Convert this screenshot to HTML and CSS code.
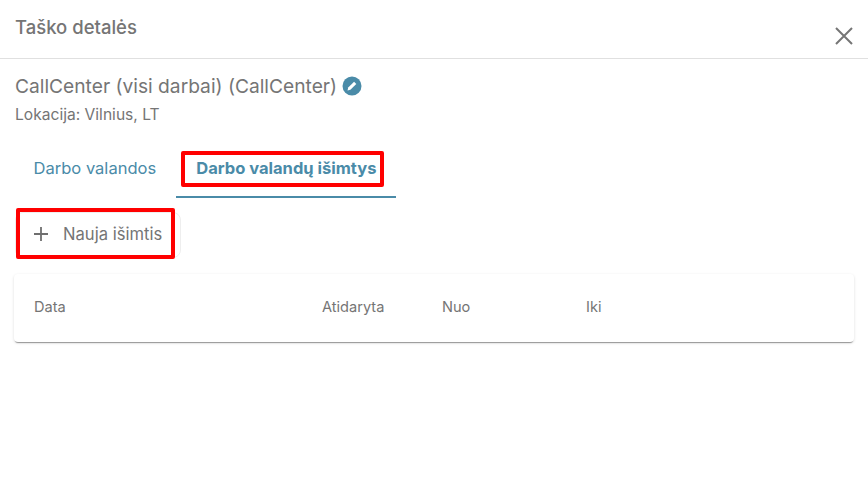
FILE: index.html
```html
<!DOCTYPE html>
<html lang="lt">
<head>
    <meta charset="UTF-8">
    <meta name="viewport" content="width=device-width, initial-scale=1.0">
    <title>Taško detalės</title>
    <link rel="stylesheet" href="styles.css">
</head>
<body>
    <div class="dialog">
        <header class="dialog-header">
            <h2>Taško detalės</h2>
            <button class="close-btn" aria-label="Uždaryti">
                <svg width="18" height="18" viewBox="0 0 18 18"><path d="M1 1 17 17M17 1 1 17" stroke="#757575" stroke-width="2" fill="none"/></svg>
            </button>
        </header>

        <div class="point-info">
            <div class="point-name">
                <span>CallCenter (visi darbai) (CallCenter)</span>
                <svg class="edit-icon" width="20" height="20" viewBox="0 0 20 20">
                    <circle cx="10" cy="10" r="9.5" fill="#4a8ba8"/>
                    <path d="M5.5 14.5l.7-2.9 5.9-5.9 2.2 2.2-5.9 5.9z" fill="#fff"/>
                </svg>
            </div>
            <div class="point-location">Lokacija: Vilnius, LT</div>
        </div>

        <nav class="tabs">
            <a class="tab">Darbo valandos</a>
            <a class="tab active">Darbo valandų išimtys</a>
        </nav>

        <div class="toolbar">
            <button class="add-btn">
                <svg width="16" height="16" viewBox="0 0 16 16"><path d="M8 1v14M1 8h14" stroke="#6f6f6f" stroke-width="1.8" fill="none"/></svg>
                Nauja išimtis
            </button>
        </div>

        <div class="table-card">
            <div class="col col-date">Data</div>
            <div class="col col-open">Atidaryta</div>
            <div class="col col-from">Nuo</div>
            <div class="col col-to">Iki</div>
        </div>

        <div class="mark mark-tab"></div>
        <div class="mark mark-btn"></div>
    </div>
</body>
</html>
```

FILE: styles.css
```css
html, body {
    margin: 0;
    height: 100%;
}
body {
    background: #fff;
    color: #757575;
    font-family: Inter, 'Noto Sans', sans-serif;
    overflow: hidden;
}
.dialog {
    position: relative;
    height: 489px;
}
.dialog-header {
    display: flex;
    justify-content: space-between;
    height: 58px;
    padding: 0 15px;
    border-bottom: 1px solid #e0e0e0;
}
.dialog-header h2 {
    margin: 16px 0 0;
    font-size: 18.5px;
    line-height: 22px;
    font-weight: 500;
    color: #757575;
}
.close-btn {
    align-self: flex-start;
    margin: 27px 0 0 0;
    padding: 0;
    border: none;
    background: none;
}
.point-info {
    padding: 15px 15px 0;
}
.point-name {
    display: flex;
    align-items: center;
    gap: 5px;
    font-size: 19.2px;
    line-height: 24px;
    color: #757575;
}
.point-location {
    margin-top: 7px;
    font-size: 15.6px;
    line-height: 20px;
}
.tabs {
    display: flex;
    margin: 16px 0 0 13.5px;
}
.tab {
    padding: 17px 20px 18px;
    font-size: 16.55px;
    line-height: 20px;
    color: #4a8ba8;
}
.tab.active {
    font-weight: 700;
    border-bottom: 2px solid #4a8ba8;
}
.toolbar {
    display: flex;
    margin: 14px 0 0 15px;
}
.add-btn {
    display: flex;
    align-items: center;
    gap: 14px;
    box-sizing: border-box;
    height: 46px;
    padding: 0 18px 3px 17px;
    font: inherit;
    font-size: 16.6px;
    color: #757575;
    background: #fff;
    border: 1px solid #eee;
    border-radius: 8px;
}
.table-card {
    display: grid;
    grid-template-columns: 288px 120px 144px 1fr;
    align-items: center;
    box-sizing: border-box;
    height: 68px;
    margin: 16px 14px 0;
    padding: 0 20px 2px;
    font-size: 14.6px;
    border-radius: 4px;
    box-shadow: 0 2px 1px -1px rgba(0,0,0,.35), 0 1px 3px rgba(0,0,0,.14);
}
.mark {
    position: absolute;
    box-sizing: border-box;
    border: 4px solid #f00;
    border-radius: 2px;
}
.mark-tab {
    left: 181px;
    top: 151px;
    width: 203px;
    height: 36px;
}
.mark-btn {
    left: 16px;
    top: 208px;
    width: 159px;
    height: 51px;
}
```
